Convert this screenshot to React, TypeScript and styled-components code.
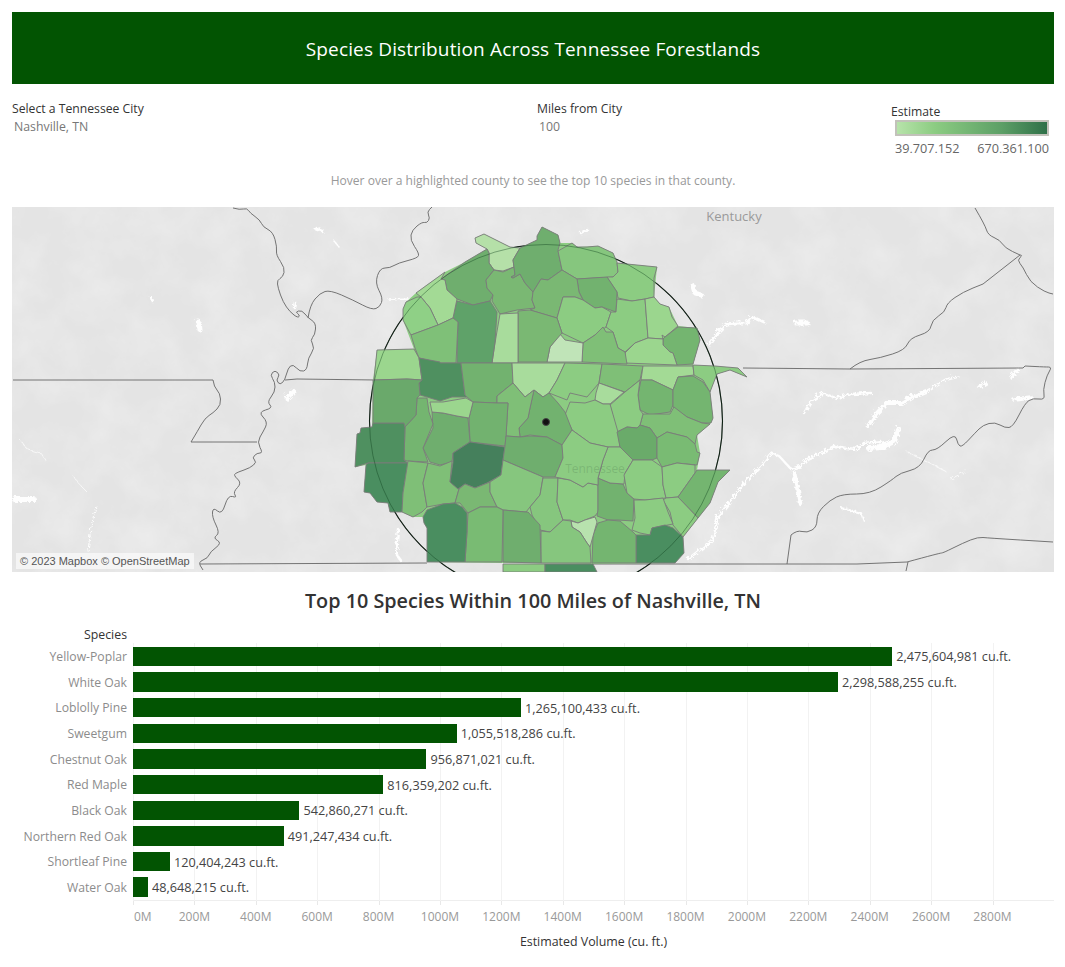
import React from 'react';
import styled, { createGlobalStyle } from 'styled-components';

const GREEN = '#025402';
const FONT = `'Open Sans', 'Noto Sans', sans-serif`;

// plot is 921px wide and runs 0 - 3000M, a gridline every 200M
const PLOT_WIDTH = 921;
const AXIS_MAX = 3000;
const GRID_STEP = (PLOT_WIDTH / AXIS_MAX) * 200;
const BAR_SCALE = 920 / AXIS_MAX; // px per million, bars stop just short of the gridline maths

const SPECIES = [
  { name: 'Yellow-Poplar', volume: 2475604981 },
  { name: 'White Oak', volume: 2298588255 },
  { name: 'Loblolly Pine', volume: 1265100433 },
  { name: 'Sweetgum', volume: 1055518286 },
  { name: 'Chestnut Oak', volume: 956871021 },
  { name: 'Red Maple', volume: 816359202 },
  { name: 'Black Oak', volume: 542860271 },
  { name: 'Northern Red Oak', volume: 491247434 },
  { name: 'Shortleaf Pine', volume: 120404243 },
  { name: 'Water Oak', volume: 48648215 },
];

const TICKS = ['200M', '400M', '600M', '800M', '1000M', '1200M', '1400M', '1600M', '1800M', '2000M', '2200M', '2400M', '2600M', '2800M'];

// drawn under the counties so no grey shows through where two traced edges don't meet
const COUNTY_BACKING =
  '416,293 445,272 465,262 487,249 476,243 475,238 484,234 510,247 520,248 537,240 542,227 558,235 560,243 572,243 577,247 598,246 613,253 617,263 657,267 654,297 660,304 669,307 678,326 697,328 700,340 693,365 738,368 747,377 730,370 717,374 710,392 713,418 710,424 697,435 700,453 697,470 730,470 718,482 710,503 683,537 684,553 675,563 593,564 503,563 427,562 427,528 424,523 423,517 413,517 402,512 390,512 388,503 377,502 370,493 364,492 366,465 355,467 357,434 372,427 373,380 377,350 414,349 403,320 403,309 406,302';

// counties in screen pixels, colour goes with the estimate
const COUNTIES: [string, string][] = [
  ['#b5e0a8', '475,238 484,234 510,247 520,248 513,260 514,267 503,271 494,270 489,263 489,253 487,249 476,243'],
  ['#6fae6e', '441,279 465,262 487,249 489,253 489,263 494,270 486,280 487,288 493,295 490,301 473,305 457,299 447,290 445,280'],
  ['#7ab873', '494,270 503,272 514,267 515,275 511,277 513,278 520,274 525,283 533,292 532,300 535,308 517,310 500,314 492,301 493,295 487,288 486,280'],
  ['#6fae6e', '520,248 537,240 537,236 542,227 558,235 560,243 558,250 562,270 548,280 541,279 533,292 525,283 520,274 513,278 511,277 515,275 514,267 513,260'],
  ['#86c67e', '558,251 572,243 577,247 587,247 598,246 613,253 617,262 618,272 613,277 577,279 562,270'],
  ['#8ccc82', '617,263 657,267 654,278 654,297 645,299 632,301 618,298 617,292 607,277 613,277 618,272'],
  ['#72b26f', '577,279 607,277 617,292 616,312 602,307 595,308 583,300 579,292'],
  ['#7ab873', '548,280 562,270 577,279 579,292 583,300 575,297 563,297 557,318 530,310 535,308 532,300 533,292 541,279'],
  ['#8ccc82', '563,297 575,297 583,300 595,308 602,307 611,312 606,327 595,335 583,343 562,333 557,318'],
  ['#8ccc82', '617,299 632,301 645,299 648,338 635,343 625,352 618,348 613,332 606,327 611,312 616,312'],
  ['#9bd68e', '645,299 654,297 660,304 669,307 672,317 678,326 665,337 662,335 663,339 648,338'],
  ['#74b570', '678,327 697,328 700,340 693,364 677,365 673,353 670,352 663,345 663,339 665,337'],
  ['#9bd68e', '648,338 663,339 663,345 670,352 673,353 677,365 625,363 625,353 635,343'],
  ['#7fbf77', '583,343 595,335 603,327 606,332 613,332 618,348 625,352 627,364 582,362'],
  ['#c0e4b8', '547,362 550,347 560,334 565,340 583,343 582,362'],
  ['#7ab873', '518,311 530,310 557,318 562,333 550,347 547,362 518,362'],
  ['#a8dc9c', '500,314 518,313 518,363 492,363 495,343'],
  ['#5fa269', '457,301 473,305 490,301 497,312 495,342 492,363 457,363 458,322 453,318'],
  ['#a3da95', '416,293 445,272 441,279 445,280 447,290 457,299 453,318 438,325 430,308 421,297'],
  ['#8fd086', '403,309 406,302 417,297 421,297 430,308 438,325 411,335 403,320'],
  ['#7fc078', '411,335 438,325 453,318 458,322 456,363 440,363 419,358 415,348'],
  ['#9bd68e', '377,350 414,349 419,358 422,380 407,379 374,380'],
  ['#4f9060', '419,358 440,362 440,363 461,363 465,395 467,397 452,397 440,401 427,397 420,395 419,383 422,380'],
  ['#72b26f', '461,363 512,363 513,383 497,396 497,403 473,402 467,397 465,395'],
  ['#a8dc9c', '512,363 565,363 557,380 549,393 543,397 534,390 525,397 513,383'],
  ['#8ccc82', '565,363 602,364 599,383 587,397 570,393 567,400 549,393 557,380'],
  ['#7fbf77', '602,364 643,366 640,380 625,392 599,383'],
  ['#a3da95', '643,366 693,366 694,375 678,377 673,390 652,380 641,380'],
  ['#8ccc82', '693,365 715,366 738,368 747,377 730,370 717,374 710,392 703,380 694,375'],
  ['#74b570', '641,380 652,380 673,390 673,405 670,412 650,415 640,410 638,395'],
  ['#74b570', '673,390 678,377 693,376 703,382 710,392 713,418 711,423 702,423 687,417 673,407'],
  ['#7fbf77', '643,414 670,414 674,407 687,417 702,423 710,424 697,435 695,444 687,437 667,432 657,438 650,428 640,425'],
  ['#8ccc82', '610,405 625,392 640,380 638,395 640,410 643,414 640,425 637,428 627,427 617,432'],
  ['#a8dc9c', '599,383 624,392 610,404 603,404 595,400 596,393'],
  ['#8ccc82', '565,415 570,402 585,403 595,400 603,404 610,404 618,432 620,447 608,447 590,443 572,430'],
  ['#72b26f', '543,397 549,393 558,403 565,412 572,430 562,445 547,437 530,435 520,437 519,428 528,418 530,408 534,390'],
  ['#7fbf77', '497,396 513,383 525,397 534,390 530,408 528,418 519,428 520,437 506,436 508,403 497,403'],
  ['#72b26f', '473,402 497,403 508,403 506,436 505,446 470,442 469,418'],
  ['#6fae6e', '432,412 443,413 457,416 468,418 470,442 453,453 452,462 440,465 430,462 423,448 433,428'],
  ['#9bd68e', '430,402 443,402 466,398 473,402 469,418 457,416 443,413 432,412'],
  ['#74b570', '417,398 427,398 429,412 433,424 423,448 428,462 408,461 404,460 405,427 416,415'],
  ['#4f9060', '373,423 404,423 405,427 404,460 408,463 368,463 355,467 357,434 360,433 361,428 372,427'],
  ['#6aa96b', '373,380 407,379 422,380 419,383 420,395 417,398 416,415 405,427 404,423 373,423'],
  ['#4a8e60', '368,463 408,463 403,493 402,512 390,512 388,503 377,502 370,493 364,492 366,465'],
  ['#7fbf77', '408,461 428,463 423,483 427,507 422,512 413,517 402,512 403,493'],
  ['#7fbf77', '428,463 440,466 452,461 450,482 459,489 455,503 443,504 427,507 423,483'],
  ['#45805c', '453,453 470,442 505,447 501,475 487,483 475,488 465,484 458,489 450,482 453,462'],
  ['#7ab873', '465,484 475,488 490,482 490,492 497,507 480,507 468,513 460,503 455,503 459,489'],
  ['#6fae6e', '506,436 520,437 530,436 547,437 562,445 563,458 555,477 543,477 503,460 505,446'],
  ['#86c67e', '490,482 501,475 503,460 543,477 540,495 530,507 526,512 503,510 497,507 490,492'],
  ['#86c67e', '543,478 558,478 557,502 563,520 550,532 540,530 532,515 530,507 540,495'],
  ['#8ccc82', '558,478 570,480 583,487 588,483 598,485 598,512 595,516 585,520 578,523 570,520 563,520 557,502'],
  ['#72b26f', '598,478 610,483 623,484 627,493 634,499 633,521 618,520 608,520 597,516 598,510'],
  ['#8ccc82', '608,447 620,447 633,460 625,473 624,484 610,483 598,478 603,460'],
  ['#8ccc82', '562,445 572,430 590,443 608,447 603,460 598,478 598,485 588,483 583,487 570,480 555,477 563,458'],
  ['#6aab6a', '617,432 627,427 637,428 640,425 650,428 657,438 657,458 652,460 633,460 620,447'],
  ['#79bb73', '657,438 667,432 687,437 695,444 697,452 700,453 697,465 677,463 662,467 657,458'],
  ['#8ccc82', '633,460 652,460 662,467 663,485 666,498 645,500 634,499 627,493 624,475 630,465'],
  ['#8ccc82', '662,467 677,463 695,465 695,473 678,497 666,498 663,485'],
  ['#74b570', '697,470 730,470 718,482 710,503 698,518 678,497 695,473'],
  ['#8ccc82', '666,498 678,497 698,518 683,537 673,525 670,512 663,500'],
  ['#8ccc82', '634,500 645,500 663,498 668,512 673,524 652,528 650,535 640,533 632,530 635,518'],
  ['#4a8e60', '636,535 650,535 652,528 665,525 673,528 683,537 684,553 675,563 636,563'],
  ['#74b570', '592,563 593,535 598,523 608,520 620,521 633,532 636,535 636,563'],
  ['#b8e2ae', '571,521 578,523 585,520 595,517 597,522 590,547 587,543 580,532 572,527'],
  ['#86c67e', '541,531 550,532 563,520 571,521 572,527 580,532 587,543 590,547 591,563 541,563'],
  ['#6fae6e', '503,510 526,512 528,512 540,525 541,563 503,562'],
  ['#79bb73', '468,513 480,507 497,507 503,510 502,562 465,562 467,532'],
  ['#4a8e60', '423,517 427,510 443,504 455,503 462,507 467,513 467,532 465,562 427,562 427,528 424,523'],
  ['#8ccc82', '503,564 545,564 545,572 503,572'],
  ['#4a8e60', '545,564 593,564 597,572 545,572'],
];

// straight state lines, traced in screen pixels
const STATE_LINES = [
  '13,380 213,380',
  '191,442 257,442',
  '285,380 297,379 377,380',
  '200,564 427,563',
  '593,564 857,564 907,562',
  '908,562 906,571',
  '787,564 791,535',
  '1025,366 1023,368 850,369 743,368',
  '983,284 1020,255',
];

// river and ridge borders, these get smoothed
const RIVERS = [
  '213,380 214,387 220,393 221,405 213,413 205,418 197,432 191,442',
  '233,208 240,210 247,208 250,213 260,220 263,227 273,232 277,247 276,255 285,268 283,277 277,280 278,288 283,302 290,312 298,318 300,315 295,312 302,310 308,318 316,323 315,335 310,340 315,348 308,358 307,370 300,372 293,364 288,368 285,380 280,385 276,380 280,375 275,370 270,375 275,382 275,392 267,402 273,408 258,412 268,422 263,432 257,442 263,453 257,453 252,458 257,462 250,468 238,472 233,475 242,483 233,492 237,498 228,495 222,515 213,507 212,517 220,533 213,538 222,543 210,552 208,558 198,562 203,570',
  '308,318 310,305 320,293 330,290 353,300 372,310 380,307 383,298 375,283 380,268 390,268 398,263 418,258 419,253 410,240 412,230 422,222 427,223 430,218 427,212 432,207',
  '907,562 940,553 943,553 963,543 978,537 988,538 1053,542',
  '791,535 797,530 807,533 817,527 817,513 830,500 843,494 870,494 892,480 900,473 920,468 928,450 937,450 955,433 958,445 962,447 975,433 983,425 995,422 1005,428 1013,427 1025,403 1033,398 1045,400 1043,390 1047,375 1052,367 1045,367 1025,366',
  '850,369 860,361 880,358 905,350 910,338 930,332 932,320 945,312 947,303 963,292 983,284',
  '1020,255 1023,255 1017,260 1023,267 1030,282 1045,292 1053,294',
  '975,208 985,225 988,235 1000,240 1005,248 1020,255',
];

// reservoirs and creeks that show up white on the base map: points, stroke width
const WATER: [string, number][] = [
  ['687,558 700,548 712,538 717,515 723,508 743,482 762,462 770,452 778,455 790,468 800,465 806,458 820,452 833,445 845,447 855,448 863,442 880,440', 2.4],
  ['868,447 880,446 893,440 897,428', 6],
  ['803,412 810,400 822,392 835,397 850,393 870,392', 2.4],
  ['867,425 875,413 885,402 900,402 910,396 925,390', 4],
  ['925,390 945,378 957,375', 1.5],
  ['708,343 715,333 725,323 735,322 745,322 752,316 763,321', 3],
  ['793,472 797,490 799,502', 4.5],
  ['840,507 860,512 863,520', 2],
  ['795,322 806,322', 5],
  ['692,285 694,292 700,294', 5],
  ['1012,398 1030,396', 3.5],
  ['1010,376 1017,368', 3.5],
  ['978,386 985,382', 3.5],
  ['950,478 965,470', 0.8],
  ['905,450 945,470', 0.8],
  ['197,320 198,328', 5],
  ['286,397 292,390', 5],
  ['14,498 32,498', 6],
  ['314,227 322,230', 3],
  ['333,240 338,246', 1.5],
  ['293,306 294,301', 2.5],
  ['150,296 151,300', 2.5],
  ['20,440 25,447 32,450 40,452 45,460', 0.7],
  ['72,475 80,485 85,490', 0.7],
  ['95,505 90,525 87,550', 1],
  ['397,528 395,553 400,560', 2.5],
  ['387,298 407,297', 1.5],
  ['580,232 586,228', 2.5],
];

// turns a traced point list into a soft curve through the midpoints
const smooth = (points: string) => {
  const p = points.split(' ').map((s) => s.split(',').map(Number));
  let d = `M${p[0][0]} ${p[0][1]}`;
  for (let i = 1; i < p.length - 1; i++) {
    const mx = (p[i][0] + p[i + 1][0]) / 2;
    const my = (p[i][1] + p[i + 1][1]) / 2;
    d += ` Q${p[i][0]} ${p[i][1]} ${mx} ${my}`;
  }
  const last = p[p.length - 1];
  return `${d} L${last[0]} ${last[1]}`;
};

const GlobalStyle = createGlobalStyle`
  html, body {
    margin: 0;
    padding: 0;
    background: #fff;
    font-family: ${FONT};
  }
`;

const Page = styled.div`
  width: 1065px;
  box-sizing: border-box;
  padding: 12px 11px 0 12px;
`;

const Banner = styled.div`
  height: 72px;
  box-sizing: border-box;
  padding-top: 2px;
  background: ${GREEN};
  color: #fff;
  font-size: 19px;
  letter-spacing: 0.15px;
  display: flex;
  align-items: center;
  justify-content: center;
`;

const Filters = styled.div`
  display: grid;
  grid-template-columns: 525px 354px 1fr;
  height: 76px;
`;

const Filter = styled.div`
  padding-top: 16px;
`;

const FilterLabel = styled.div`
  font-size: 12.2px;
  line-height: 18px;
  color: #333;
`;

const FilterValue = styled.div`
  font-size: 12.3px;
  line-height: 18px;
  color: #777;
  padding-left: 2px;
`;

const Legend = styled.div`
  padding-top: 19px;
  width: 158px;
  height: 52px;
  overflow: hidden;
`;

const LegendTitle = styled(FilterLabel)`
  margin-bottom: -1px;
`;

const LegendRamp = styled.div`
  margin-left: 4px;
  height: 12px;
  border: 2px solid #c2c2ba;
  background: linear-gradient(to right, #b7e3aa, #8ccc82 25%, #5c9f66 70%, #2f7048);
`;

const LegendScale = styled.div`
  margin: 3px 0 0 4px;
  height: 14px;
  overflow: hidden;
  display: flex;
  justify-content: space-between;
  font-size: 12.7px;
  line-height: 19px;
  color: #666;
`;

const Hint = styled.div`
  font-size: 12.05px;
  line-height: 20px;
  height: 47px;
  padding-top: 11px;
  box-sizing: border-box;
  text-align: center;
  color: #999;
`;

const MapFrame = styled.div`
  position: relative;
  height: 365px;
  background: #e6e6e6;
  overflow: hidden;
`;

const MapSvg = styled.svg`
  display: block;
  width: 100%;
  height: 100%;
`;

const Attribution = styled.div`
  position: absolute;
  left: 4px;
  bottom: 3px;
  padding: 0 4px;
  font-family: 'Liberation Sans', Arial, sans-serif;
  font-size: 11px;
  line-height: 16px;
  color: #555;
  background: rgba(255, 255, 255, 0.6);
`;

const ChartTitle = styled.h2`
  margin: 15px 0 0;
  height: 28px;
  font-size: 19.8px;
  line-height: 28px;
  font-weight: 600;
  text-align: center;
  color: #333;
`;

const SpeciesHead = styled.div`
  height: 28px;
  width: 115px;
  box-sizing: border-box;
  padding-top: 12px;
  font-size: 12.3px;
  line-height: 16px;
  text-align: right;
  color: #333;
`;

const Row = styled.div`
  display: grid;
  grid-template-columns: 121px 1fr;
  height: 25.67px;
`;

const RowName = styled.div`
  padding: 1px 6px 0 0;
  font-size: 12.2px;
  line-height: 25.67px;
  text-align: right;
  color: #8c8c8c;
  white-space: nowrap;
`;

const Track = styled.div`
  display: flex;
  align-items: center;
  gap: 4px;
  background: repeating-linear-gradient(to right, #f2f2f2 0 1px, transparent 1px ${GRID_STEP}px);
`;

const Bar = styled.div`
  height: 19.5px;
  background: ${GREEN};
`;

const BarValue = styled.span`
  font-size: 12.7px;
  color: #444;
  white-space: nowrap;
`;

const TickMarks = styled.div`
  margin-left: 121px;
  height: 4px;
  border-top: 1px solid #eee;
  background: repeating-linear-gradient(to right, #e8e8e8 0 1px, transparent 1px ${GRID_STEP}px);
`;

const TickLabels = styled.div`
  margin-left: 121px;
  display: flex;
  height: 24px;
  align-items: center;
  font-size: 12px;
  color: #999;
`;

const FirstTick = styled.span`
  width: ${GRID_STEP / 2}px;
  padding-left: 1px;
  box-sizing: border-box;
`;

const Tick = styled.span`
  width: ${GRID_STEP}px;
  text-align: center;
`;

const AxisTitle = styled.div`
  margin-left: 121px;
  height: 26px;
  font-size: 12.4px;
  line-height: 26px;
  text-align: center;
  color: #333;
`;

const BaseMap: React.FC = () => (
  <MapSvg viewBox="12 207 1042 365" preserveAspectRatio="none">
    <defs>
      <filter id="terrain" x="0" y="0" width="100%" height="100%">
        <feTurbulence type="fractalNoise" baseFrequency="0.025" numOctaves="5" seed="7" />
        <feColorMatrix values="0 0 0 0 1  0 0 0 0 1  0 0 0 0 1  0.5 0 0 0 -0.18" />
      </filter>
      <filter id="jagged" x="-5%" y="-5%" width="110%" height="110%">
        <feTurbulence type="turbulence" baseFrequency="0.22" numOctaves="2" seed="3" />
        <feDisplacementMap in="SourceGraphic" scale="5" />
      </filter>
    </defs>
    <rect x="12" y="207" width="1042" height="365" fill="#e4e4e4" />
    <rect x="12" y="207" width="1042" height="365" filter="url(#terrain)" />
    <g filter="url(#jagged)">
      {WATER.map(([points, width]) => (
        <polyline key={points} points={points} fill="none" stroke="#fff" strokeOpacity="0.95" strokeWidth={width} strokeLinejoin="round" strokeLinecap="round" />
      ))}
    </g>
    {STATE_LINES.map((points) => (
      <polyline key={points} points={points} fill="none" stroke="#666" strokeWidth="0.9" />
    ))}
    {RIVERS.map((points) => (
      <path key={points} d={smooth(points)} fill="none" stroke="#666" strokeWidth="0.9" />
    ))}
    <text x="734" y="221" textAnchor="middle" fontFamily={FONT} fontSize="13" fill="#9a9a9a">Kentucky</text>
    <circle cx="546" cy="421" r="176.5" fill="none" stroke="#111" strokeWidth="1.1" />
    <polygon points={COUNTY_BACKING} fill="#8ccc82" />
    {COUNTIES.map(([fill, points]) => (
      <polygon key={points} points={points} fill={fill} stroke="#7a7a7a" strokeWidth="0.9" strokeLinejoin="round" />
    ))}
    <text x="595" y="473" textAnchor="middle" fontFamily={FONT} fontSize="12" fill="#3f6b45" fillOpacity="0.22">Tennessee</text>
    <circle cx="546" cy="421" r="176.5" fill="none" stroke="#0b3d1a" strokeOpacity="0.4" strokeWidth="1" />
    <circle cx="546" cy="422" r="3.5" fill="#111" stroke="#444" strokeWidth="1" />
  </MapSvg>
);

const App: React.FC = () => (
  <Page>
    <GlobalStyle />
    <Banner>Species Distribution Across Tennessee Forestlands</Banner>

    <Filters>
      <Filter>
        <FilterLabel>Select a Tennessee City</FilterLabel>
        <FilterValue>Nashville, TN</FilterValue>
      </Filter>
      <Filter>
        <FilterLabel>Miles from City</FilterLabel>
        <FilterValue>100</FilterValue>
      </Filter>
      <Legend>
        <LegendTitle>Estimate</LegendTitle>
        <LegendRamp />
        <LegendScale>
          <span>39,707,152</span>
          <span>670,361,100</span>
        </LegendScale>
      </Legend>
    </Filters>

    <Hint>Hover over a highlighted county to see the top 10 species in that county.</Hint>

    <MapFrame>
      <BaseMap />
      <Attribution>© 2023 Mapbox © OpenStreetMap</Attribution>
    </MapFrame>

    <ChartTitle>Top 10 Species Within 100 Miles of Nashville, TN</ChartTitle>
    <SpeciesHead>Species</SpeciesHead>
    {SPECIES.map((s) => (
      <Row key={s.name}>
        <RowName>{s.name}</RowName>
        <Track>
          <Bar style={{ width: (s.volume / 1e6) * BAR_SCALE }} />
          <BarValue>{s.volume.toLocaleString('en-US')} cu.ft.</BarValue>
        </Track>
      </Row>
    ))}
    <TickMarks />
    <TickLabels>
      <FirstTick>0M</FirstTick>
      {TICKS.map((t) => (
        <Tick key={t}>{t}</Tick>
      ))}
    </TickLabels>
    <AxisTitle>Estimated Volume (cu. ft.)</AxisTitle>
  </Page>
);

export default App;
